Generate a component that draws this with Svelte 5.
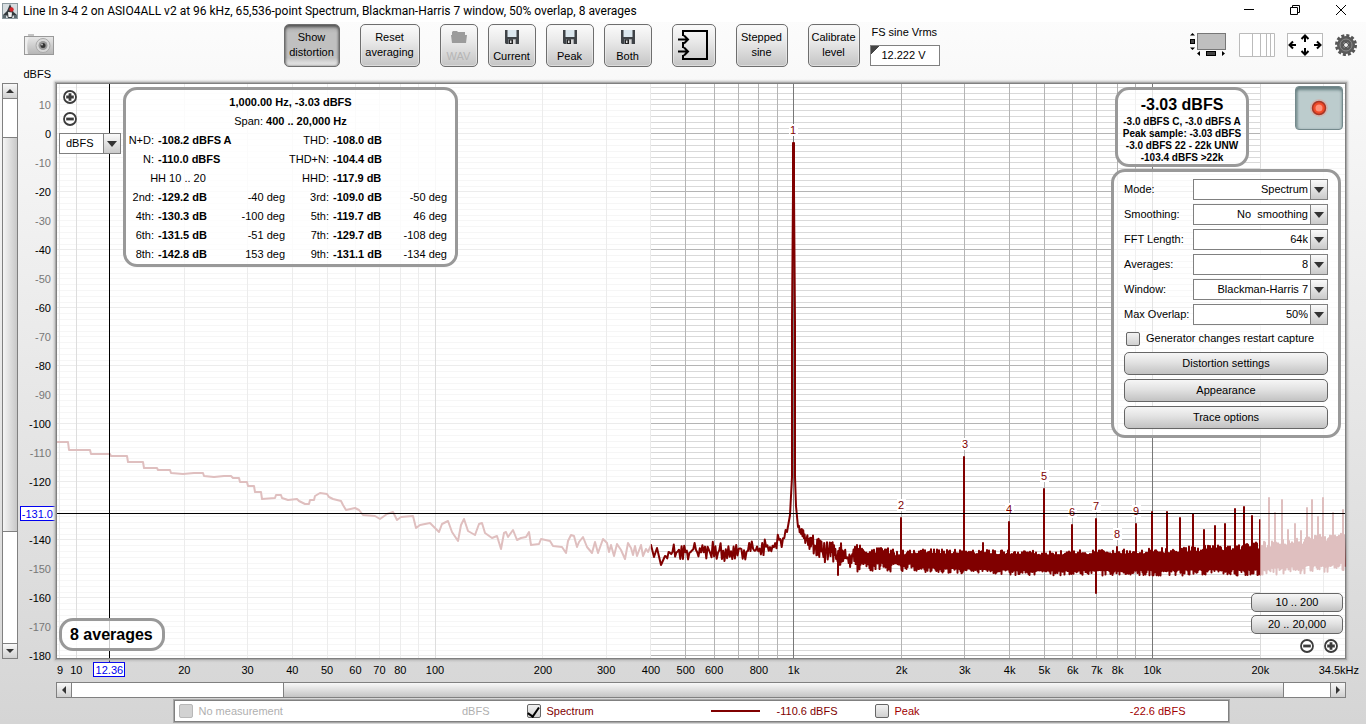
<script>
  let plotW = $state(1288);
  let plotH = $state(574);

  let units = $state('dBFS');
  let fullScale = $state('12.222 V');
  let restartCapture = $state(false);
  let showSpectrum = $state(true);
  let showPeak = $state(false);

  const F_MIN = 8.83;
  const F_MAX = 34450;
  const DB_MAX = 17.24;
  const DB_MIN = -180.7;
  const SPAN = [400, 20000];
  const cursor = { hz: 12.36, db: -131 };

  // the trace below is stored in these units and scaled to the plot
  const BASE_W = 1288;
  const BASE_H = 574;

  const settings = [
    { id: 'mode', label: 'Mode:', value: 'Spectrum', options: ['Spectrum', 'RTA 1/3 octave', 'RTA 1/6 octave'] },
    { id: 'smoothing', label: 'Smoothing:', value: 'No  smoothing', options: ['No  smoothing', '1/12 octave', '1/48 octave'] },
    { id: 'fft', label: 'FFT Length:', value: '64k', options: ['32k', '64k', '128k'] },
    { id: 'averages', label: 'Averages:', value: '8', options: ['4', '8', '16'] },
    { id: 'window', label: 'Window:', value: 'Blackman-Harris 7', options: ['Rectangular', 'Hann', 'Blackman-Harris 7'] },
    { id: 'overlap', label: 'Max Overlap:', value: '50%', options: ['0%', '50%', '75%'] }
  ];

  const harmonics = [
    ['2nd:', '-129.2 dB', '-40 deg', '3rd:', '-109.0 dB', '-50 deg'],
    ['4th:', '-130.3 dB', '-100 deg', '5th:', '-119.7 dB', '46 deg'],
    ['6th:', '-131.5 dB', '-51 deg', '7th:', '-129.7 dB', '-108 deg'],
    ['8th:', '-142.8 dB', '153 deg', '9th:', '-131.1 dB', '-134 deg']
  ];

  const lowEnd = [
    [0,358],[11,358],[12,366],[33,366],[34,370],[53,370],[54,372],[70,372],[71,378],[86,378],[87,384],
    [100,384],[101,386],[113,386],[114,389],[126,390],[137,389],[146,389],[147,392],[157,393],[167,392],
    [174,392],[176,394],[182,394],[183,398],[190,398],[191,402],[197,402],[198,408],[204,408],[205,415],
    [218,414],[219,411],[224,411],[225,414],[231,416],[240,415],[242,417],[248,420],[252,420],[253,416],
    [257,416],[258,412],[263,409],[270,410],[272,413],[276,415],[284,417],[286,421],[289,426],[298,424],
    [302,426],[306,431],[318,432],[323,435],[330,430],[336,428],[340,436],[344,433],[356,432],[359,444],
    [363,441],[373,439],[382,448],[385,440],[391,437],[395,448],[401,457],[404,441],[407,435],[411,447],
    [418,451],[422,440],[425,439],[428,449],[435,454],[440,452],[444,465],[447,449],[449,448],[451,453],
    [456,446],[460,456],[464,454],[469,453],[472,448],[474,461],[482,460],[484,455],[493,457],[496,462],
    [505,463],[509,469],[511,457],[514,451],[517,452],[520,463],[522,458],[526,453],[530,463],[535,469],
    [538,458],[541,469],[546,455],[550,459],[552,468],[554,461],[557,472],[560,460],[564,466],[568,475],
    [571,459],[574,464],[576,471],[578,462],[580,472],[584,461],[586,472],[589,465],[591,468],[594,461],
    [597,473],[600,464],[604,481],[608,472]
  ];

  const fundamental = [
    [730,448],[733,431],[735,393],[735,240],[736,106],[736,59],[737,59],[737,106],[738,240],[738,393],
    [739,422],[741,443]
  ];

  // x, centre and half height of the noise band
  const noiseBand = [
    [608,472,7],[620,467,10],[680,467,12],[700,465,13],[715,461,12],[726,455,8],[731,446,4],
    [741,443,3],[750,456,8],[765,467,13],[780,470,13],[800,474,13],[843,476,11],[976,479,12],
    [1093,478,13],[1203,475,16],[1288,467,19]
  ];

  const spikes = [
    [781,491],[844,434],[907,373],[926,459],[952,438],[987,405],[1015,441],[1039,509],[1039,435],
    [1060,463],[1079,440],[1095,428],[1110,428],[1123,434],[1136,430],[1147,446],[1158,442],[1168,440],
    [1178,425],[1187,423],[1195,432],[1203,436],[1212,414],[1218,429],[1225,416],[1231,446],[1238,440],
    [1244,447],[1250,424],[1255,416],[1261,433],[1266,414],[1276,429],[1286,426]
  ];

  const peakMarks = [
    [1, 736, 59], [2, 844, 434], [3, 908, 373], [4, 952, 438], [5, 987, 405],
    [6, 1015, 441], [7, 1039, 435], [8, 1060, 463], [9, 1079, 440]
  ];

  function bandAt(x) {
    let i = 1;
    while (i < noiseBand.length - 1 && noiseBand[i][0] < x) i++;
    const [x0, c0, a0] = noiseBand[i - 1];
    const [x1, c1, a1] = noiseBand[i];
    const t = (x - x0) / (x1 - x0);
    return [c0 + (c1 - c0) * t, a0 + (a1 - a0) * t];
  }

  function buildTrace() {
    let seed = 4711;
    const random = () => {
      seed = (seed * 1664525 + 1013904223) % 4294967296;
      return seed / 4294967296;
    };
    const points = [...lowEnd];
    const noise = (from, to, step) => {
      let up = false;
      for (let x = from; x < to; x += step) {
        const [centre, half] = bandAt(x);
        up = !up;
        const solid = x < 860 ? 0.3 : 0.6;
        const reach = x < 800 ? random() * 1.1 - 0.2 : solid + (1.05 - solid) * random() ** 2;
        points.push([x, centre + (up ? -1 : 1) * half * reach]);
        const spike = spikes.filter((s) => s[0] > x - step && s[0] <= x);
        for (const s of spike) points.push([s[0], centre], s, [s[0], centre]);
      }
    };
    noise(609, 730, 1.3);
    points.push(...fundamental);
    noise(742, 800, 0.7);
    noise(800, 1288, 0.5);
    return points;
  }

  const trace = buildTrace();

  const xOf = (hz) => (Math.log(hz / F_MIN) / Math.log(F_MAX / F_MIN)) * plotW;
  const yOf = (db) => ((DB_MAX - db) / (DB_MAX - DB_MIN)) * plotH;

  const kx = $derived(plotW / BASE_W);
  const ky = $derived(plotH / BASE_H);
  const tracePath = $derived(
    'M' + trace.map(([x, y]) => `${(x * kx).toFixed(1)} ${(y * ky).toFixed(1)}`).join('L')
  );

  const freqLines = [9];
  for (const decade of [10, 100, 1000, 10000]) {
    for (let n = 1; n < 10; n++) if (n * decade < F_MAX) freqLines.push(n * decade);
  }
  const dbLines = [];
  for (let db = 16; db >= -180; db -= 2) dbLines.push(db);
  const dbLabels = [];
  for (let db = 10; db >= -180; db -= 10) if (db !== -130) dbLabels.push(db);

  const freqLabels = [
    9, 10, 20, 30, 40, 50, 60, 70, 80, 100, 200, 300, 400, 500, 600, 800,
    1000, 2000, 3000, 4000, 5000, 6000, 7000, 8000, 10000, 20000
  ];
  const isDecade = (hz) => Number.isInteger(Math.log10(hz));
  const hzText = (hz) => (hz >= 1000 ? `${hz / 1000}k` : `${hz}`);
</script>

{#snippet zoomIcon(plus)}
  <svg width="16" height="16" viewBox="0 0 16 16" aria-hidden="true">
    <circle cx="8" cy="8" r="6" fill="#fff" stroke="#3c3c3c" stroke-width="1.8" />
    <path d={plus ? 'M4.2 8H11.8M8 4.2V11.8' : 'M4.2 8H11.8'} stroke="#3c3c3c" stroke-width="2.8" />
  </svg>
{/snippet}

{#snippet floppy()}
  <svg width="16" height="16" viewBox="0 0 16 16" aria-hidden="true">
    <path d="M1 1H15V15H2L1 14Z" fill="#3f4347" />
    <path d="M3.5 1H12.5V8H3.5Z" fill="#dbe7ee" />
    <path d="M4 10H12V15H4Z" fill="#70757a" />
    <path d="M5 10.500H9V15H5Z" fill="#222" />
    <path d="M6 11.500H7.500V14H6Z" fill="#ddd" />
    <path d="M9 10.500H11.500V15H9Z" fill="#d8d8d8" />
  </svg>
{/snippet}

{#snippet arrow(d)}
  <svg width="8" height="8" viewBox="0 0 8 8" aria-hidden="true"><path {d} fill="#333" /></svg>
{/snippet}

{#snippet dropArrow()}
  <svg width="10" height="8" viewBox="0 0 10 8" aria-hidden="true"><path d="M0 1H10L5 7Z" fill="#333" /></svg>
{/snippet}

<div class="app">
  <header class="titlebar">
    <svg width="16" height="16" viewBox="0 0 16 16" aria-hidden="true">
      <rect x=".5" y=".5" width="15" height="15" fill="#d7dde0" stroke="#8b989e" />
      <path d="M8 1L11.500 9L15 12L13 14L11 12L10 15H6L5 12L3 14L1 12L5 8Z" fill="#343a3e" />
      <path d="M6 9L10 9.500L9.500 14H6.500Z" fill="#f4f4f4" />
      <circle cx="9.500" cy="6.500" r="2.200" fill="#d5252a" />
      <path d="M1 12H4V15H1ZM12 12H15V15H12Z" fill="#5d6a70" />
    </svg>
    <h1>Line In 3-4 2 on ASIO4ALL v2 at 96 kHz, 65,536-point Spectrum, Blackman-Harris 7 window, 50% overlap, 8 averages</h1>
    <div class="window-buttons">
      <button aria-label="Minimize"><svg width="12" height="12" viewBox="0 0 12 12"><path d="M1 5.500H11" stroke="#000" /></svg></button>
      <button aria-label="Restore">
        <svg width="12" height="12" viewBox="0 0 12 12" fill="none" stroke="#000"><path d="M1.500 3.500H8.500V10.500H1.500Z M3.500 3.500V1.500H10.500V8.500H8.500" /></svg>
      </button>
      <button aria-label="Close"><svg width="12" height="12" viewBox="0 0 12 12"><path d="M1 1L11 11M11 1L1 11" stroke="#000" /></svg></button>
    </div>
  </header>

  <div class="toolbar">
    <button class="plain" aria-label="Capture image">
      <svg width="30" height="22" viewBox="0 0 30 22">
        <defs>
          <linearGradient id="cam" x2="0" y2="1"><stop stop-color="#e8e8e8" /><stop offset="1" stop-color="#b5b5b5" /></linearGradient>
        </defs>
        <rect x="4" y="0" width="6" height="3" fill="#c4c4c4" />
        <rect x=".5" y="2.500" width="29" height="18" fill="url(#cam)" stroke="#999" />
        <path d="M1 3H5Q2 10 4 20H1Z" fill="#eee" />
        <circle cx="19" cy="11.500" r="7" fill="#d8d8d8" stroke="#aaa" />
        <circle cx="19" cy="11.500" r="4.500" fill="#999" />
        <circle cx="19" cy="11.500" r="2.500" fill="#333" />
        <circle cx="18" cy="10.500" r="1" fill="#bbb" />
      </svg>
    </button>

    <div class="actions">
      <button class="tool wide pressed" aria-pressed="true">Show<br />distortion</button>
      <button class="tool wider">Reset<br />averaging</button>
      <div class="files">
        <button class="tool file narrow" disabled>
          <svg width="16" height="16" viewBox="0 0 16 16" aria-hidden="true"><path d="M1 3L2 2H6L7 3H14V6H16L15 14H1L0 6H1Z" fill="#9b9b9b" /></svg>
          WAV
        </button>
        <button class="tool file">{@render floppy()}Current</button>
        <button class="tool file">{@render floppy()}Peak</button>
        <button class="tool file">{@render floppy()}Both</button>
      </div>
      <button class="tool input" aria-label="Input selection">
        <svg width="32" height="32" viewBox="0 0 32 32" fill="none" stroke="#000" stroke-width="2">
          <path d="M5 7V2H29V30H5V26M5 13V19" stroke-width="2" />
          <path d="M0 10.500H10M6 6.500L10 10.500L6 14.500M0 22.500H10M6 18.500L10 22.500L6 26.500" />
        </svg>
      </button>
      <button class="tool">Stepped<br />sine</button>
      <button class="tool">Calibrate<br />level</button>
      <div class="fullscale">
        <label for="fs">FS sine Vrms</label>
        <input id="fs" type="text" bind:value={fullScale} />
      </div>
    </div>

    <div class="view-buttons">
      <button class="plain" aria-label="Scrollbars">
        <svg width="38" height="26" viewBox="0 0 38 26">
          <rect x="8.500" y="1.500" width="28" height="16" fill="#bfbfbf" stroke="#777" />
          <path d="M1 3.500L3.500 1L6 3.500ZM1 15.500L3.500 18L6 15.500ZM11 19L8 21.500L11 24ZM33 19L36 21.500L33 24Z" fill="#000" />
          <rect x="1.500" y="7.500" width="4" height="4" fill="#444" stroke="#000" />
          <rect x="17.500" y="19.500" width="9" height="4" fill="#444" stroke="#000" />
        </svg>
      </button>
      <button class="plain" aria-label="Log frequency axis">
        <svg width="36" height="24" viewBox="0 0 36 24"><path d="M.5 .5H35.500V23.500H.5ZM13.500 .5V23.500M21.500 .5V23.500M27.500 .5V23.500M31.500 .5V23.500" fill="#fff" stroke="#bbb" /></svg>
      </button>
      <button class="plain" aria-label="Graph limits">
        <svg width="36" height="24" viewBox="0 0 36 24" fill="none">
          <rect x=".5" y=".5" width="35" height="23" fill="#fff" stroke="#bbb" />
          <path d="M18 9V3M14.500 6L18 2.500L21.500 6M18 15V21M14.500 18L18 21.500L21.500 18M9 12H3M6 8.500L2.500 12L6 15.500M27 12H33M30 8.500L33.500 12L30 15.500" stroke="#000" stroke-width="2" />
        </svg>
      </button>
      <button class="plain" aria-label="Settings">
        <svg width="22" height="22" viewBox="0 0 22 22">
          <circle cx="11" cy="11" r="9.500" fill="none" stroke="#555" stroke-width="3" stroke-dasharray="3 1.974" />
          <circle cx="11" cy="11" r="6" fill="none" stroke="#5a5a5a" stroke-width="6" />
          <circle cx="11" cy="11" r="6" fill="none" stroke="#8c8c8c" />
          <circle cx="11" cy="11" r="2.500" fill="#eee" stroke="#333" />
        </svg>
      </button>
    </div>
  </div>

  <main class="workspace">
    <div class="axis-unit">dBFS</div>

    <div class="scrollbar vertical">
      <button aria-label="Scroll up">{@render arrow('M0 6L4 2L8 6Z')}</button>
      <div class="track before"></div>
      <div class="thumb"></div>
      <div class="track after"></div>
      <button aria-label="Scroll down">{@render arrow('M0 2L4 6L8 2Z')}</button>
    </div>

    <div class="y-axis">
      <svg width="38" height={plotH} class="axis">
        {#each dbLabels as db}
          <text x="33" y={yOf(db) + 4} text-anchor="end" fill={db % 20 ? '#777' : '#000'}>{db}</text>
        {/each}
        <rect x="2.500" y={Math.round(yOf(cursor.db)) - 7.5} width="35" height="14" fill="#fff" stroke="#0000f0" />
        <text x="35" y={yOf(cursor.db) + 4} text-anchor="end" fill="#0000f0">{cursor.db.toFixed(1)}</text>
      </svg>
    </div>

    <div class="plot" bind:clientWidth={plotW} bind:clientHeight={plotH}>
      <svg class="chart" width={plotW} height={plotH} role="img" aria-label="Spectrum">
        <g shape-rendering="crispEdges">
          {#each dbLines as db}
            <line x1="0" x2={plotW} y1={yOf(db)} y2={yOf(db)} stroke={db % 20 ? '#d9d9d9' : '#b4b4b4'} />
          {/each}
          {#each freqLines as hz}
            <line x1={xOf(hz)} x2={xOf(hz)} y1="0" y2={plotH} stroke={isDecade(hz) ? '#777' : '#b4b4b4'} />
          {/each}
        </g>
        {#if showSpectrum}
          <path d={tracePath} fill="none" stroke="#800000" stroke-width="2" stroke-linejoin="round" />
        {/if}
        <rect width={xOf(SPAN[0])} height={plotH} fill="#fff" opacity=".75" />
        <rect x={xOf(SPAN[1])} width={plotW - xOf(SPAN[1])} height={plotH} fill="#fff" opacity=".75" />
        {#each peakMarks as [n, x, y]}
          <rect x={x * kx - 4} y={y * ky - 19} width="9" height="12" fill="#fff" />
          <text x={x * kx} y={y * ky - 9} text-anchor="middle" fill="#800000">{n}</text>
        {/each}
        <g shape-rendering="crispEdges" stroke="#000">
          <line x1="0" x2={plotW} y1={yOf(cursor.db)} y2={yOf(cursor.db)} />
          <line x1={xOf(cursor.hz)} x2={xOf(cursor.hz)} y1="0" y2={plotH} />
        </g>
      </svg>

      <div class="overlay zoom-y">
        <button class="plain" aria-label="Zoom in level">{@render zoomIcon(true)}</button>
        <button class="plain" aria-label="Zoom out level">{@render zoomIcon(false)}</button>
        <div class="combo units">
          <select aria-label="Level units" bind:value={units}>
            <option>dBFS</option>
            <option>dBV</option>
          </select>
          <span class="drop">{@render dropArrow()}</span>
        </div>
      </div>

      <div class="overlay panel distortion">
        <p class="strong">1,000.00 Hz, -3.03 dBFS</p>
        <p>Span: <b>400 .. 20,000 Hz</b></p>
        <table>
          <colgroup><col class="c1" /><col class="c2" /><col class="c3" /><col class="c4" /><col class="c5" /><col class="c6" /></colgroup>
          <tbody>
            <tr><th>N+D:</th><td class="level" colspan="2">-108.2 dBFS A</td><th>THD:</th><td class="level">-108.0 dB</td><td></td></tr>
            <tr><th>N:</th><td class="level" colspan="2">-110.0 dBFS</td><th>THD+N:</th><td class="level">-104.4 dB</td><td></td></tr>
            <tr><td class="middle" colspan="2">HH 10 .. 20</td><td></td><th>HHD:</th><td class="level">-117.9 dB</td><td></td></tr>
            {#each harmonics as [even, evenDb, evenDeg, odd, oddDb, oddDeg]}
              <tr>
                <th>{even}</th><td class="level">{evenDb}</td><td>{evenDeg}</td>
                <th>{odd}</th><td class="level">{oddDb}</td><td>{oddDeg}</td>
              </tr>
            {/each}
          </tbody>
        </table>
      </div>

      <div class="overlay panel average-count">8 averages</div>

      <div class="overlay panel readout">
        <strong>-3.03 dBFS</strong>
        <span>-3.0 dBFS C, -3.0 dBFS A</span>
        <span>Peak sample: -3.03 dBFS</span>
        <span>-3.0 dBFS 22 - 22k UNW</span>
        <span>-103.4 dBFS &gt;22k</span>
      </div>

      <button class="overlay record" aria-label="Record">
        <svg width="24" height="24" viewBox="0 0 24 24">
          <circle cx="12" cy="12" r="9" fill="#f28b7d" opacity=".35" />
          <circle cx="12" cy="12" r="6.500" fill="#f04a28" stroke="#a83524" stroke-width="1.500" />
          <circle cx="12" cy="12" r="3.500" fill="#ff9078" />
        </svg>
      </button>

      <div class="overlay panel settings">
        {#each settings as item}
          <div class="field">
            <label for={item.id}>{item.label}</label>
            <div class="combo">
              <select id={item.id} bind:value={item.value}>
                {#each item.options as option}
                  <option value={option}>{option.replace('  ', '\u00a0 ')}</option>
                {/each}
              </select>
              <span class="drop">{@render dropArrow()}</span>
            </div>
          </div>
        {/each}
        <label class="check"><input type="checkbox" bind:checked={restartCapture} />Generator changes restart capture</label>
        <button class="bar">Distortion settings</button>
        <button class="bar">Appearance</button>
        <button class="bar">Trace options</button>
      </div>

      <div class="overlay ranges">
        <button class="bar">10 .. 200</button>
        <button class="bar">20 .. 20,000</button>
        <div class="zoom-x">
          <button class="plain" aria-label="Zoom out frequency">{@render zoomIcon(false)}</button>
          <button class="plain" aria-label="Zoom in frequency">{@render zoomIcon(true)}</button>
        </div>
      </div>
    </div>

    <div class="x-axis">
      <svg width={plotW} height="22" class="axis">
        {#each freqLabels as hz}
          <text x={xOf(hz)} y="15" text-anchor="middle">{hzText(hz)}</text>
        {/each}
        <text x={plotW + 14} y="15" text-anchor="end">34.5kHz</text>
        <line x1={xOf(cursor.hz)} x2={xOf(cursor.hz)} y1="-1" y2="4" stroke="#000" shape-rendering="crispEdges" />
        <rect x={Math.round(xOf(cursor.hz)) - 15.5} y="3.500" width="31" height="14" fill="#fff" stroke="#0000f0" />
        <text x={xOf(cursor.hz)} y="15" text-anchor="middle" fill="#0000f0">{cursor.hz}</text>
      </svg>
    </div>

    <div class="scrollbar horizontal">
      <button aria-label="Scroll left">{@render arrow('M6 0V8L2 4Z')}</button>
      <div class="track before"></div>
      <div class="thumb"></div>
      <div class="track after"></div>
      <button aria-label="Scroll right">{@render arrow('M2 0V8L6 4Z')}</button>
    </div>

    <div class="legend">
      <div class="entry muted">
        <label class="check"><input type="checkbox" disabled />No measurement</label>
        <span>dBFS</span>
      </div>
      <div class="entry">
        <label class="check"><input type="checkbox" bind:checked={showSpectrum} />Spectrum</label>
        <i class="swatch"></i>
        <span>-110.6 dBFS</span>
      </div>
      <div class="entry peak">
        <label class="check"><input type="checkbox" bind:checked={showPeak} />Peak</label>
        <span>-22.6 dBFS</span>
      </div>
    </div>
  </main>
</div>

<style>
  :global(body) { margin: 0; }

  .app {
    box-sizing: border-box;
    display: flex;
    flex-direction: column;
    min-height: 100vh;
    font: 11px/15px "Liberation Sans", Arial, sans-serif;
    color: #000;
    background: linear-gradient(#fdfdfd, #d5d5d5);
  }
  .app :global(*) { box-sizing: border-box; }
  svg { display: block; }
  button, input, select { font: inherit; color: inherit; }
  button { padding: 0; }
  p { margin: 0; }

  .titlebar {
    display: flex;
    align-items: center;
    gap: 5px;
    height: 22px;
    padding: 0 16px 0 2px;
    background: #fff;
  }
  h1 {
    flex: 1;
    margin: 0;
    font: 12px/20px Roboto, "Noto Sans", sans-serif;
    white-space: nowrap;
  }
  .window-buttons { display: flex; gap: 34px; margin-right: 3px; padding-bottom: 2px; }
  .window-buttons button, .plain {
    display: block;
    border: 0;
    background: none;
  }

  .toolbar {
    display: flex;
    justify-content: space-between;
    align-items: center;
    min-height: 46px;
    padding: 0 9px 0 24px;
  }
  .actions { display: flex; gap: 20px; margin-right: 20px; }
  .files { display: flex; gap: 10px; }
  .tool {
    min-width: 52px;
    height: 43px;
    border: 1px solid #6e6e6e;
    border-radius: 5px;
    background: linear-gradient(#fbfbfb, #e9e9e9 40%, #c4c4c4);
    box-shadow: inset 0 0 0 1px #f4f4f480;
  }
  .tool.wide { width: 56px; }
  .tool.wider { width: 60px; }
  .tool.pressed {
    background: linear-gradient(#a9a9a9, #c0c0c0 20%, #c0c0c0 80%, #f0f0f0);
    box-shadow: inset 0 2px 3px #555, inset 0 0 3px #777;
  }
  .tool.file {
    display: flex;
    flex-direction: column;
    align-items: center;
    gap: 4px;
    min-width: 38px;
    width: 48px;
    padding-top: 4px;
  }
  .tool.file.narrow { width: 38px; }
  .tool:disabled { color: #b5b5b5; }
  .tool.input { display: grid; place-items: center; min-width: 44px; }
  .fullscale { display: flex; flex-direction: column; width: 70px; margin-left: -10px; padding-top: 1px; gap: 5px; }
  .fullscale label { padding-left: 2px; white-space: nowrap; }
  .fullscale input {
    width: 100%;
    height: 21px;
    padding: 0 13px 0 0;
    border: 1px solid #808080;
    text-align: right;
    background: linear-gradient(135deg, #444 6px, #fff 6px);
  }
  .view-buttons { display: flex; align-items: center; gap: 12px; }

  .workspace {
    flex: 1;
    display: grid;
    grid-template-columns: 16px 38px minmax(0, 1fr);
    grid-template-rows: 15px minmax(560px, 1fr) 23px 16px 24px;
    padding: 0 20px 2px 2px;
  }
  .axis-unit { grid-area: 1 / 1 / 2 / 3; padding-right: 5px; line-height: 13px; text-align: right; }
  .axis, .chart { overflow: visible; }
  .y-axis { grid-area: 2 / 2; height: 0; padding-top: 1px; }
  .x-axis { grid-area: 3 / 3; height: 0; min-width: 0; padding-left: 1px; }
  .plot {
    position: relative;
    grid-area: 2 / 3;
    border: 1px solid #808080;
    background: #fff;
    box-shadow: 0 0 0 1px #a8a8a8, 0 0 2px 2px #bdbdbd;
  }
  .overlay { position: absolute; }

  .scrollbar { display: flex; border: 1px solid #808080; background: #fff; }
  .scrollbar button {
    display: grid;
    place-items: center;
    border: 0;
    background: linear-gradient(#f8f8f8, #d0d0d0);
  }
  .vertical { grid-area: 2 / 1; flex-direction: column; }
  .vertical button { height: 15px; border-bottom: 1px solid #808080; }
  .vertical button:last-child { border: 0; border-top: 1px solid #808080; }
  .vertical .before { flex: 38; }
  .vertical .thumb { flex: 394; border: solid #808080; border-width: 1px 0; background: linear-gradient(90deg, #f5f5f5, #c8c8c8); }
  .vertical .after { flex: 111; }
  .horizontal { grid-area: 4 / 3; }
  .horizontal button { width: 15px; border-right: 1px solid #808080; }
  .horizontal button:last-child { border: 0; border-left: 1px solid #808080; }
  .horizontal .before { flex: 211; }
  .horizontal .thumb { flex: 999; border: solid #808080; border-width: 0 1px; background: linear-gradient(#f8f8f8, #c4c4c4); }
  .horizontal .after { flex: 46; }

  .panel {
    border: 3px solid #999;
    border-radius: 14px;
    background: rgba(255, 255, 255, 0.8);
  }
  .distortion {
    top: 3px;
    left: 66px;
    width: 335px;
    padding-top: 3px;
    text-align: center;
    line-height: 19px;
  }
  .strong, .level { font-weight: bold; }
  table { width: 100%; border-collapse: collapse; table-layout: fixed; }
  th { padding: 0 2px 0 0; font-weight: normal; text-align: right; white-space: nowrap; }
  td { padding: 0 2px 0 0; text-align: right; white-space: nowrap; }
  td:last-child { padding-right: 8px; }
  td.level { padding: 0 0 0 2px; text-align: left; }
  td.middle { text-align: center; }
  .c1 { width: 30px; }
  .c2 { width: 76px; }
  .c3 { width: 55px; }
  .c4 { width: 44px; }
  .c5 { width: 60px; }
  .c6 { width: 64px; }

  .average-count {
    left: 2px;
    bottom: 7px;
    padding: 5px 9px 4px 8px;
    font-size: 16px;
    font-weight: bold;
    line-height: 18px;
  }
  .readout {
    top: 3px;
    right: 96px;
    display: flex;
    flex-direction: column;
    width: 134px;
    padding-top: 4px;
    align-items: center;
    font-size: 10px;
    font-weight: bold;
    line-height: 12px;
    white-space: nowrap;
  }
  .readout strong { font-size: 16px; line-height: 22px; }
  .record {
    top: 2px;
    right: 2px;
    display: grid;
    place-items: center;
    width: 48px;
    height: 44px;
    border: 1px solid #74898c;
    border-radius: 4px;
    background: #bccccd;
    box-shadow: inset 0 3px 3px #687f82, inset 2px 0 2px #91a4a6;
  }
  .settings {
    top: 85px;
    right: 4px;
    display: flex;
    flex-direction: column;
    gap: 4px;
    width: 230px;
    padding: 7px 10px 6px;
  }
  .field { display: grid; grid-template-columns: 69px 1fr; align-items: center; }

  .combo { display: grid; grid-template-columns: 1fr 17px; height: 21px; border: 1px solid #808080; background: #fff; }
  .combo select {
    grid-area: 1 / 1 / 2 / 3;
    min-width: 0;
    padding: 0 19px 0 6px;
    border: 0;
    background: none;
    appearance: none;
    text-align-last: right;
  }
  .drop {
    grid-area: 1 / 2;
    display: grid;
    place-items: center;
    border-left: 1px solid #808080;
    background: linear-gradient(#fafafa, #cacaca);
    pointer-events: none;
  }
  .units { width: 62px; }
  .units select { text-align-last: left; }

  .check { display: flex; align-items: center; gap: 6px; white-space: nowrap; }
  .settings .check { height: 19px; padding-left: 2px; }
  .check input {
    display: grid;
    place-items: center;
    width: 14px;
    height: 14px;
    margin: 0;
    border: 1px solid #666;
    border-radius: 2px;
    appearance: none;
    background: linear-gradient(#f2f2f2, #d0d0d0);
  }
  .check input:disabled { border-color: #b8b8b8; background: #d2d2d2; }
  .check input:checked::before {
    content: "";
    width: 5px;
    height: 10px;
    border: solid #000;
    border-width: 0 2px 2px 0;
    transform: rotate(35deg);
  }
  .bar {
    height: 23px;
    border: 1px solid #666;
    border-radius: 5px;
    background: linear-gradient(#f6f6f6, #e2e2e2 45%, #c2c2c2);
  }

  .zoom-y { top: 5px; left: 2px; display: flex; flex-direction: column; gap: 6px; }
  .zoom-y .plain { width: 16px; margin-left: 3px; }
  .ranges { right: 2px; bottom: 4px; display: flex; flex-direction: column; gap: 3px; width: 92px; }
  .ranges .bar { height: 19px; }
  .zoom-x { display: flex; justify-content: flex-end; gap: 8px; padding: 1px 4px 0 0; }

  .legend {
    grid-area: 5 / 3;
    justify-self: center;
    display: grid;
    grid-template-columns: repeat(3, 311px);
    gap: 37px;
    width: 100%;
    max-width: 1055px;
    margin-top: 2px;
    padding-left: 4px;
    border: 1px solid #808080;
    background: #fff;
    box-shadow: 0 0 0 1px #a8a8a8;
    color: #800000;
  }
  .entry { display: flex; align-items: center; justify-content: space-between; }
  .entry.muted { color: #b0b0b0; }
  .entry.peak { color: #a00000; }
  .swatch { width: 49px; height: 2px; margin-left: 101px; background: #800000; }
</style>
